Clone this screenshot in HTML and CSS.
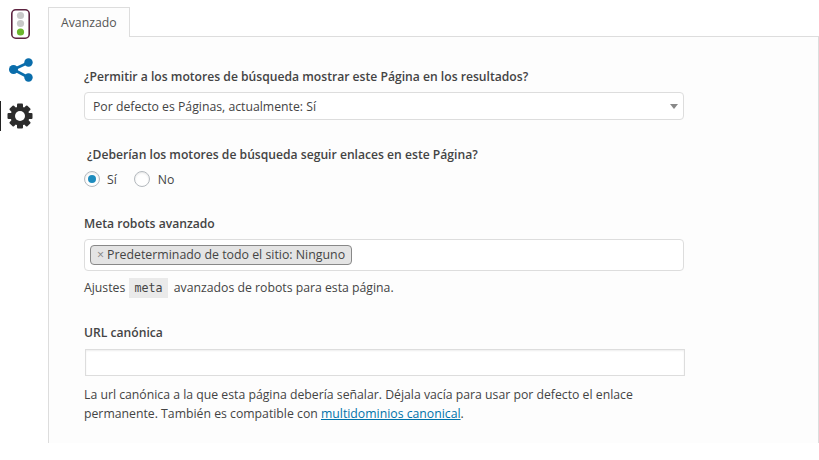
FILE: index.html
```html
<!DOCTYPE html>
<html lang="es">
<head>
<meta charset="utf-8">
<title>Avanzado</title>
<link rel="stylesheet" href="styles.css">
</head>
<body>
<div class="page">
  <nav class="side">
    <div class="side-item light">
      <svg width="19" height="30" viewBox="0 0 19 30"><rect x="0.8" y="0.8" width="17.4" height="28.4" rx="4" fill="#fff" stroke="#5d2340" stroke-width="1.6"/><circle cx="9.5" cy="6.5" r="3.6" fill="#c8c8c8"/><circle cx="9.5" cy="14.5" r="3.6" fill="#c8c8c8"/><circle cx="9.5" cy="23" r="3.6" fill="#6cb52d"/></svg>
    </div>
    <div class="side-item share">
      <svg width="24" height="24" viewBox="0 0 24 24"><path d="M4.5 11.5 L19.5 4.5 M4.5 11.5 L19.5 19.5" stroke="#0a6dab" stroke-width="2.6" fill="none"/><circle cx="4.5" cy="11.5" r="4.5" fill="#0a6dab"/><circle cx="19.5" cy="4.5" r="4.2" fill="#0a6dab"/><circle cx="19.5" cy="19.5" r="4.2" fill="#0a6dab"/></svg>
    </div>
    <div class="side-item gear">
      <svg width="26" height="26" viewBox="0 0 26 26"><g fill="#2c2c2c"><rect x="10" y="0.5" width="6" height="25" rx="1"/><rect x="10" y="0.5" width="6" height="25" rx="1" transform="rotate(45 13 13)"/><rect x="10" y="0.5" width="6" height="25" rx="1" transform="rotate(90 13 13)"/><rect x="10" y="0.5" width="6" height="25" rx="1" transform="rotate(135 13 13)"/><circle cx="13" cy="13" r="9.5"/></g><circle cx="13" cy="13" r="5" fill="#fff"/></svg>
    </div>
  </nav>
  <main class="main">
    <div class="tabs"><div class="tab">Avanzado</div></div>
    <section class="panel">
      <div class="field f1">
        <label class="label">¿Permitir a los motores de búsqueda mostrar este Página en los resultados?</label>
        <div class="select"><span>Por defecto es Páginas, actualmente: Sí</span><i class="caret"></i></div>
      </div>
      <div class="field f2">
        <label class="label">¿Deberían los motores de búsqueda seguir enlaces en este Página?</label>
        <div class="radios">
          <span class="radio on"></span><span class="radio-text">Sí</span>
          <span class="radio"></span><span class="radio-text no">No</span>
        </div>
      </div>
      <div class="field f3">
        <label class="label">Meta robots avanzado</label>
        <div class="multi"><span class="chip"><b class="x">×</b>Predeterminado de todo el sitio: Ninguno</span></div>
        <p class="help">Ajustes <code class="code">meta</code> avanzados de robots para esta página.</p>
      </div>
      <div class="field f4">
        <label class="label">URL canónica</label>
        <div class="input"></div>
        <p class="desc">La url canónica a la que esta página debería señalar. Déjala vacía para usar por defecto el enlace permanente. También es compatible con <a href="#" class="link">multidominios canonical</a>.</p>
      </div>
    </section>
  </main>
</div>
</body>
</html>
```
FILE: styles.css
```css
* { box-sizing: border-box; }
html, body { margin: 0; padding: 0; background: #fff; }
body { width: 819px; height: 460px; overflow: hidden; font-family: "Open Sans", "Noto Sans", sans-serif; font-size: 12.25px; color: #444; }
.page { display: flex; align-items: flex-start; }
.side { width: 48px; flex: none; padding-top: 9px; display: flex; flex-direction: column; align-items: flex-start; }
.side-item { display: flex; align-items: flex-start; }
.light { height: 49px; padding-left: 11px; }
.share { height: 43px; padding-left: 9px; }
.gear { height: 30px; border-left: 1px solid #222; padding: 2px 0 0 6px; }
.main { flex: none; width: 771px; }
.tabs { display: flex; height: 37px; padding-top: 7px; }
.tab { width: 82px; height: 30px; border: 1px solid #ddd; border-bottom: 0; background: #fdfdfd; padding-left: 12px; line-height: 30px; position: relative; z-index: 1; color: #555; }
.panel { height: 407px; border: 1px solid #ddd; border-bottom: 0; background: #fdfdfd; padding: 0 0 0 35px; margin-top: -1px; }
.field { width: 600px; }
.label { display: block; font-weight: 600; font-size: 12.15px; line-height: 18px; color: #444; }
.f1 { padding-top: 31px; }
.select { margin-top: 6px; height: 28px; border: 1px solid #ddd; border-radius: 4px; background: #fff; display: flex; align-items: center; justify-content: space-between; padding: 1px 4px 0 8px; line-height: 26px; }
.caret { width: 0; height: 0; border: 4px solid transparent; border-top: 5px solid #888; border-bottom: 0; margin: -1px 1px 0 0; }
.f2 { padding-top: 26px; }
.f2 .label { padding-left: 3px; }
.radios { display: flex; align-items: center; margin-top: 6px; height: 18px; }
.radio { width: 16px; height: 16px; flex: none; border-radius: 50%; border: 1px solid #b4b9be; background: #fff; display: flex; align-items: center; justify-content: center; box-shadow: inset 0 1px 2px rgba(0,0,0,.1); }
.radio.on::before { content: ""; width: 8px; height: 8px; border-radius: 50%; background: #1e8cbe; }
.radio-text { margin: 0 17px 0 7px; }
.radio-text.no { margin-left: 8px; }
.f3 { padding-top: 27px; }
.multi { margin-top: 6px; height: 32px; border: 1px solid #ddd; border-radius: 4px; background: #fff; padding: 5px; }
.chip { display: inline-block; height: 20px; line-height: 18px; border: 1px solid #888; border-radius: 4px; background: #e4e4e4; padding: 0 6px 0 6px; color: #444; font-size: 12.35px; }
.x { font-weight: 400; color: #888; margin-right: 3px; }
.help { margin: 7px 0 0; line-height: 20px; }
.code { font-family: "DejaVu Sans Mono", monospace; font-size: 11.7px; background: #eaeaea; color: #444; padding: 3px 5px; margin: 0 3px 0 1px; }
.f4 { padding-top: 26px; }
.input { margin: 7px -1px 0 1px; height: 27px; border: 1px solid #ddd; background: #fff; box-shadow: inset 0 1px 2px rgba(0,0,0,.07); }
.desc { margin: 9px 0 0; line-height: 19px; }
.link { color: #0073aa; }
```
